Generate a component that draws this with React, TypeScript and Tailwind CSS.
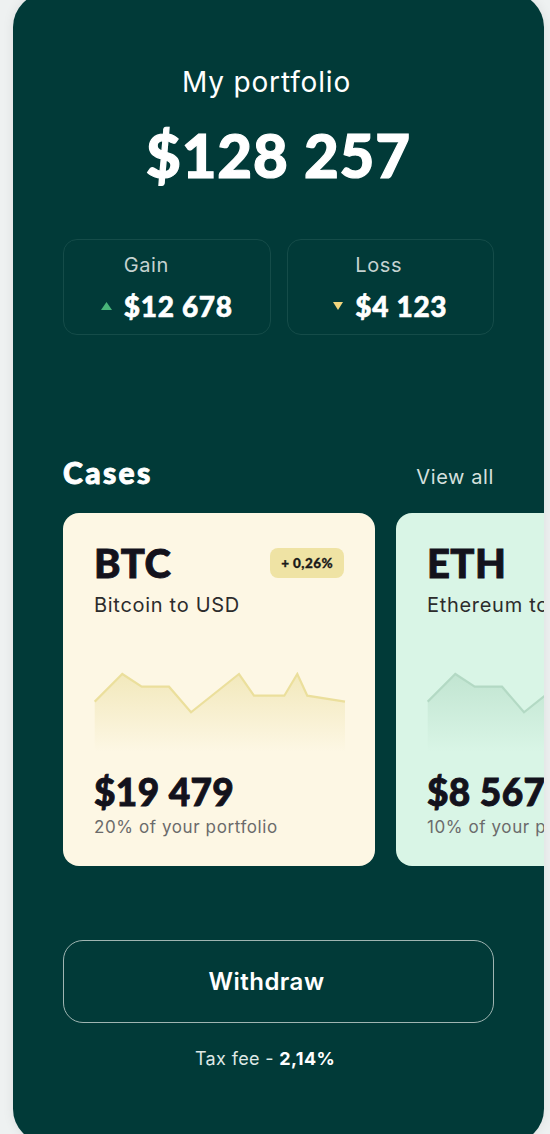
const points = "0.7,29.7 28.3,2 47.7,14.7 75,14.7 97,40.3 145,2 160,23.7 190.3,23.7 203.3,2 213.3,23.7 251,29.7";

type Case = {
  id: string;
  symbol: string;
  name: string;
  price: string;
  share: string;
  bg: string;
  stroke: string;
  fill: string;
  badge?: string;
};

const cases: Case[] = [
  {
    id: "btc",
    symbol: "BTC",
    name: "Bitcoin to USD",
    price: "$19 479",
    share: "20% of your portfolio",
    bg: "bg-[#fdf7e4]",
    stroke: "#ebdf9c",
    fill: "#f1e7b8",
    badge: "+ 0,26%",
  },
  {
    id: "eth",
    symbol: "ETH",
    name: "Ethereum to USD",
    price: "$8 567",
    share: "10% of your portfolio",
    bg: "bg-[#d9f5e6]",
    stroke: "#b3d9c4",
    fill: "#bfe3cf",
    badge: "+ 1,12%",
  },
];

// heavier look for the display font
const heavy = "font-['Lato'] font-black [-webkit-text-stroke:0.9px_currentColor]";

function Spark({ id, stroke, fill }: { id: string; stroke: string; fill: string }) {
  return (
    <svg width="252" height="80" viewBox="0 0 252 80" className="block">
      <defs>
        <linearGradient id={`g-${id}`} x1="0" y1="0" x2="0" y2="1">
          <stop offset="0%" stopColor={fill} stopOpacity="0.9" />
          <stop offset="100%" stopColor={fill} stopOpacity="0" />
        </linearGradient>
      </defs>
      <polygon points={`0.7,80 ${points} 251,80`} fill={`url(#g-${id})`} />
      <polyline points={points} fill="none" stroke={stroke} strokeWidth="2.2" strokeLinejoin="miter" />
    </svg>
  );
}

function CaseCard({ c }: { c: Case }) {
  return (
    <div className={`shrink-0 w-[312px] h-[353px] rounded-[16px] ${c.bg} pl-[31px] pr-[31px] pt-[26px]`}>
      <div className="flex items-center justify-between h-[48px]">
        <div className={`${heavy} text-[40px] leading-[48px] tracking-[0.01em] text-[#13121c]`}>{c.symbol}</div>
        {c.badge && (
          <div className="h-[30px] px-[11px] rounded-[8px] bg-[#efe3a4] flex items-center font-['Lato'] font-black text-[13.5px] text-[#1a1a1a] tracking-[0.03em] [-webkit-text-stroke:0.3px_currentColor]">
            {c.badge}
          </div>
        )}
      </div>
      <div className="mt-[6px] text-[20px] leading-[24px] tracking-[0.035em] text-[#2c2c2c] whitespace-nowrap">{c.name}</div>
      <div className="mt-[55px]">
        <Spark id={c.id} stroke={c.stroke} fill={c.fill} />
      </div>
      <div className={`mt-[18px] ${heavy} text-[37px] leading-[44px] tracking-[0.01em] text-[#13121c] whitespace-nowrap`}>
        {c.price}
      </div>
      <div className="mt-[2px] text-[17px] leading-[22px] tracking-[0.035em] text-[#6b6b6b] whitespace-nowrap">{c.share}</div>
    </div>
  );
}

function StatBox({ label, value, up }: { label: string; value: string; up: boolean }) {
  return (
    <div className="flex-1 h-[96px] rounded-[14px] border border-[#154c49] flex justify-center">
      <div className="flex items-start gap-[12px] pt-[13px]">
        <div className="mt-[37px] h-[32px] flex items-center">
          {up ? (
            <svg width="11" height="8" viewBox="0 0 11 8"><polygon points="5.5,0 11,8 0,8" fill="#48b479" /></svg>
          ) : (
            <svg width="10" height="8" viewBox="0 0 10 8"><polygon points="0,0 10,0 5,8" fill="#f1d57d" /></svg>
          )}
        </div>
        <div>
          <div className="text-[20px] leading-[24px] tracking-[0.03em] text-[#c5d2d0]">{label}</div>
          <div className="mt-[13px] font-['Lato'] font-black [-webkit-text-stroke:0.6px_currentColor] text-[28px] leading-[32px] tracking-[0.025em] text-white whitespace-nowrap">{value}</div>
        </div>
      </div>
    </div>
  );
}

export default function App() {
  return (
    <div className="w-[550px] h-[1134px] overflow-hidden bg-[#eef1f1] font-['Inter',sans-serif]">
      <div className="ml-[13px] mt-[-7px] w-[531px] h-[1150px] rounded-[34px] bg-[#013a38] overflow-hidden px-[50px] pt-[72px] shadow-[0_0_12px_rgba(0,0,0,0.08)]">
        <div className="pr-[24px] text-center text-[28px] leading-[34px] text-white tracking-[0.03em]">My portfolio</div>
        <div className="mt-[21px] text-center font-['Lato'] font-black [-webkit-text-stroke:1.2px_currentColor] text-[60px] leading-[70px] tracking-[0.015em] text-white">$128 257</div>

        <div className="mt-[49px] flex gap-[16px]">
          <StatBox label="Gain" value="$12 678" up />
          <StatBox label="Loss" value="$4 123" up={false} />
        </div>

        <div className="mt-[119px] flex items-baseline justify-between h-[36px]">
          <div className={`${heavy} text-[30px] leading-[36px] text-white tracking-[0.08em]`}>Cases</div>
          <div className="text-[20px] leading-[24px] tracking-[0.03em] text-[#d5e0de]">View all</div>
        </div>

        <div className="mt-[23px] -mr-[50px] flex gap-[21px] overflow-hidden">
          {cases.map((c) => (
            <CaseCard key={c.id} c={c} />
          ))}
        </div>

        <button className="mt-[74px] w-full h-[83px] rounded-[20px] border-[1.5px] border-[#9fb5b2] pr-[24px] text-white text-[24px] font-semibold tracking-[0.02em]">
          Withdraw
        </button>

        <div className="mt-[24px] pr-[27px] text-center text-[18px] leading-[24px] tracking-[0.02em] text-[#dfe8e6]">
          Tax fee - <span className="font-bold text-white">2,14%</span>
        </div>
      </div>
    </div>
  );
}
